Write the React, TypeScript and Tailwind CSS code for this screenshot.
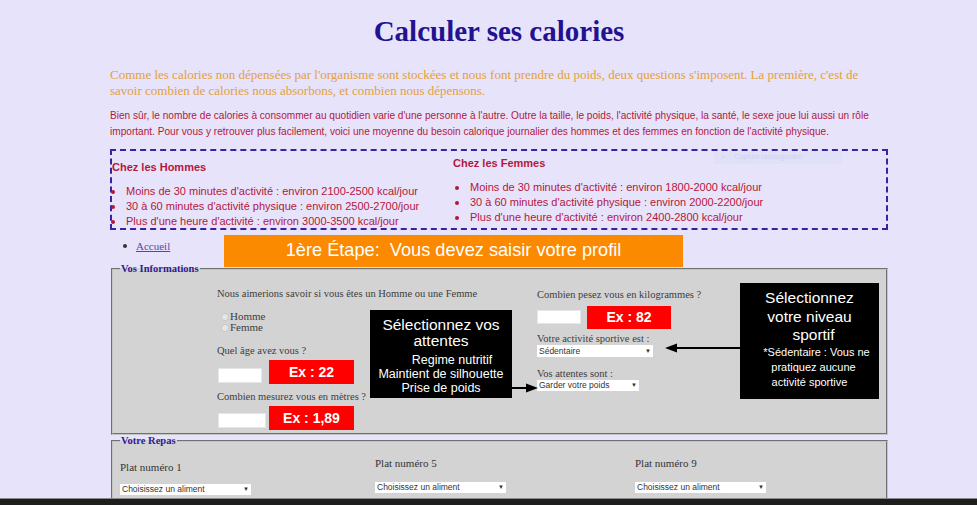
import React from "react";

const hommes = [
  "Moins de 30 minutes d'activité : environ 2100-2500 kcal/jour",
  "30 à 60 minutes d'activité physique : environ 2500-2700/jour",
  "Plus d'une heure d'activité : environ 3000-3500 kcal/jour",
];

const femmes = [
  "Moins de 30 minutes d'activité : environ 1800-2000 kcal/jour",
  "30 à 60 minutes d'activité physique : environ 2000-2200/jour",
  "Plus d'une heure d'activité : environ 2400-2800 kcal/jour",
];

function Bullets({ items }: { items: string[] }) {
  return (
    <ul className="flex flex-col">
      {items.map((t) => (
        <li key={t} className="flex items-center h-[15px] leading-[15px]">
          <span className="w-[4px] h-[4px] rounded-full bg-[#b5173a] shrink-0" />
          <span className="ml-[11px]">{t}</span>
        </li>
      ))}
    </ul>
  );
}

export default function App() {
  return (
    <div className="h-[505px] w-full overflow-hidden bg-[#e7e3fa] flex flex-col font-['Liberation_Serif',serif]">
      <div className="flex-1 overflow-hidden">
        <div className="ml-[110px] w-[778px]">
          {/* header */}
          <h1 className="pt-[13px] text-center text-[29px] leading-[36px] font-bold text-[#23128f]">
            Calculer ses calories
          </h1>
          <p className="mt-[18px] text-[13px] leading-[16px] text-[#e3a13b]">
            {"Comme les calories non dépensées par l'organisme sont stockées et nous font prendre du poids, deux questions s'imposent. La première, c'est de"}
            <br />
            {"savoir combien de calories nous absorbons, et combien nous dépensons."}
          </p>
          <p className="mt-[9px] text-[10.1px] leading-[16px] text-[#b5173a] font-['Liberation_Sans',sans-serif]">
            {"Bien sûr, le nombre de calories à consommer au quotidien varie d'une personne à l'autre. Outre la taille, le poids, l'activité physique, la santé, le sexe joue lui aussi un rôle"}
            <br />
            {"important. Pour vous y retrouver plus facilement, voici une moyenne du besoin calorique journalier des hommes et des femmes en fonction de l'activité physique."}
          </p>

          {/* moyennes */}
          <div className="relative mt-[9px] h-[81px] border-2 border-dashed border-[#3a23a0] grid grid-cols-[341px_1fr] text-[#b5173a] text-[11px] font-['Liberation_Sans',sans-serif]">
            <div className="pt-[9px]">
              <h3 className="text-[11px] font-bold leading-[14px]">Chez les Hommes</h3>
              <div className="mt-[10px] -ml-[1px]">
                <Bullets items={hommes} />
              </div>
            </div>
            <div className="pt-[5px]">
              <h3 className="text-[11px] font-bold leading-[14px]">Chez les Femmes</h3>
              <div className="mt-[10px] ml-[2px]">
                <Bullets items={femmes} />
              </div>
            </div>
            <div className="absolute left-[602px] top-[0px] w-[128px] h-[13px] bg-[#e0e0f8] flex items-center pl-[8px] text-[7px] text-[#d2d2ee]">
              <span className="mr-[10px]">▪</span>Capture rectangulaire
            </div>
          </div>

          {/* accueil + banner */}
          <div className="relative mt-[9px]">
            <ul className="flex items-center h-[14px] pl-[13px] text-[11px]">
              <li className="flex items-center">
                <span className="w-[4px] h-[4px] rounded-full bg-[#333]" />
                <a href="#" className="ml-[9px] underline text-[#6b3aa8]">Accueil</a>
              </li>
            </ul>
            <div className="absolute left-[114px] -top-[4px] w-[459px] h-[32px] bg-[#fb8a00] flex items-center justify-center text-white text-[18.2px] whitespace-pre font-['Liberation_Sans',sans-serif]">
              {"1ère Étape:  Vous devez saisir votre profil"}
            </div>
          </div>

          {/* vos informations */}
          <fieldset className="mt-[9px] ml-[1px] w-[777px] border-2 [border-style:groove] border-[#c4c4c4] bg-[#d3d3d3]">
            <legend className="ml-[7px] px-[1px] text-[10.5px] leading-[14px] font-bold text-[#2f1b96]">Vos Informations</legend>
            <div className="relative h-[157px] grid grid-cols-[424px_1fr] text-[10.5px] text-[#3d3d3d]">
              <div className="pl-[104px] flex flex-col">
                <div className="mt-[11px] leading-[14px]">Nous aimerions savoir si vous êtes un Homme ou une Femme</div>
                <div className="mt-[10px] flex flex-col ml-[4px] text-[11px]">
                  <label className="flex items-center h-[11px]">
                    <span className="shrink-0 w-[8px] h-[8px] rounded-full bg-[#e6e6e6] border border-[#c8c8c8]" />
                    <span className="ml-[1px]">Homme</span>
                  </label>
                  <label className="flex items-center h-[11px]">
                    <span className="shrink-0 w-[8px] h-[8px] rounded-full bg-[#e6e6e6] border border-[#c8c8c8]" />
                    <span className="ml-[1px]">Femme</span>
                  </label>
                </div>
                <div className="mt-[11px] leading-[14px]">Quel âge avez vous ?</div>
                <div className="relative mt-[10px] ml-[1px] w-[44px] h-[15px] bg-white border border-[#e6e6e6]">
                  <div className="absolute left-[50px] -top-[9px] w-[85px] h-[24px] bg-[#ff0000] flex items-center justify-center text-white text-[14px] font-bold font-['Liberation_Sans',sans-serif]">
                    Ex : 22
                  </div>
                </div>
                <div className="mt-[7px] leading-[14px]">Combien mesurez vous en mètres ?</div>
                <div className="relative mt-[9px] ml-[1px] w-[48px] h-[15px] bg-white border border-[#e6e6e6]">
                  <div className="absolute left-[50px] -top-[8px] w-[85px] h-[24px] bg-[#ff0000] flex items-center justify-center text-white text-[14px] font-bold font-['Liberation_Sans',sans-serif]">
                    Ex : 1,89
                  </div>
                </div>
              </div>

              <div className="flex flex-col">
                <div className="mt-[12px] leading-[14px]">Combien pesez vous en kilogrammes ?</div>
                <div className="relative mt-[8px] w-[44px] h-[14px] bg-white border border-[#e6e6e6]">
                  <div className="absolute left-[49px] -top-[5px] w-[84px] h-[23px] bg-[#ff0000] flex items-center justify-center text-white text-[14px] font-bold font-['Liberation_Sans',sans-serif]">
                    Ex : 82
                  </div>
                </div>
                <div className="mt-[9px] leading-[12px]">Votre activité sportive est :</div>
                <div className="w-[116px] h-[12px] bg-white flex items-center justify-between px-[2px] text-[8.5px] text-[#333] font-['Liberation_Sans',sans-serif]">
                  <span>Sédentaire</span>
                  <span className="text-[6px]">▼</span>
                </div>
                <div className="mt-[11px] leading-[12px]">Vos attentes sont :</div>
                <div className="w-[102px] h-[11px] bg-white flex items-center justify-between px-[2px] text-[8.5px] text-[#333] font-['Liberation_Sans',sans-serif]">
                  <span>Garder votre poids</span>
                  <span className="text-[6px]">▼</span>
                </div>
              </div>

              {/* annotations */}
              <div className="absolute left-[257px] top-[34px] w-[142px] h-[88px] bg-black text-white text-center font-['Liberation_Sans',sans-serif] pt-[7px]">
                <div className="text-[15.5px] leading-[16px]">Sélectionnez vos</div>
                <div className="text-[15.5px] leading-[16px]">attentes</div>
                <div className="mt-[4px] pl-[22px] text-[12.5px] leading-[14px]">Regime nutritif</div>
                <div className="text-[12.5px] leading-[14px]">Maintient de silhouette</div>
                <div className="text-[12.5px] leading-[14px]">Prise de poids</div>
              </div>
              <svg className="absolute left-[399px] top-[107px]" width="26" height="10" viewBox="0 0 26 10">
                <line x1="0" y1="5" x2="16" y2="5" stroke="black" strokeWidth="2" />
                <polygon points="26,5 14,0.5 14,9.5" fill="black" />
              </svg>

              <div className="absolute left-[627px] top-[7px] w-[139px] h-[116px] bg-black text-white text-center font-['Liberation_Sans',sans-serif] pt-[6px]">
                <div className="text-[15.5px] leading-[18.5px]">Sélectionnez</div>
                <div className="text-[15.5px] leading-[18.5px]">votre niveau</div>
                <div className="pl-[8px] text-[15.5px] leading-[18.5px]">sportif</div>
                <div className="pl-[14px] text-[11px] leading-[15px]">*Sédentaire : Vous ne</div>
                <div className="pl-[8px] text-[11px] leading-[15px]">pratiquez aucune</div>
                <div className="text-[11px] leading-[15px]">activité sportive</div>
              </div>
              <svg className="absolute left-[552px] top-[67px]" width="75" height="10" viewBox="0 0 75 10">
                <polygon points="0,5 12,0.5 12,9.5" fill="black" />
                <line x1="10" y1="5" x2="75" y2="5" stroke="black" strokeWidth="2" />
              </svg>
            </div>
          </fieldset>

          {/* votre repas */}
          <fieldset className="-mt-[1px] ml-[1px] w-[777px] h-[80px] border-2 [border-style:groove] border-[#c4c4c4] bg-[#d3d3d3]">
            <legend className="ml-[7px] px-[1px] text-[10.5px] leading-[14px] font-bold text-[#2f1b96]">Votre Repas</legend>
            <div className="grid grid-cols-[255px_260px_1fr] pl-[7px] text-[11px] text-[#333]">
              {[
                { n: 1, top: "mt-[12px]", sel: "mt-[10px]" },
                { n: 5, top: "mt-[8px]", sel: "mt-[12px]" },
                { n: 9, top: "mt-[8px]", sel: "mt-[12px]" },
              ].map((c) => (
                <div key={c.n} className="flex flex-col">
                  <div className={`${c.top} leading-[14px]`}>Plat numéro {c.n}</div>
                  <div className={`${c.sel} w-[131px] h-[11px] bg-white flex items-center justify-between px-[2px] text-[8.5px] text-[#333] font-['Liberation_Sans',sans-serif]`}>
                    <span>Choisissez un aliment</span>
                    <span className="text-[6px]">▼</span>
                  </div>
                </div>
              ))}
            </div>
          </fieldset>
        </div>
      </div>
      <div className="h-[7px] bg-[#1e1e1e] border-t border-[#8a8a8a]" />
    </div>
  );
}
